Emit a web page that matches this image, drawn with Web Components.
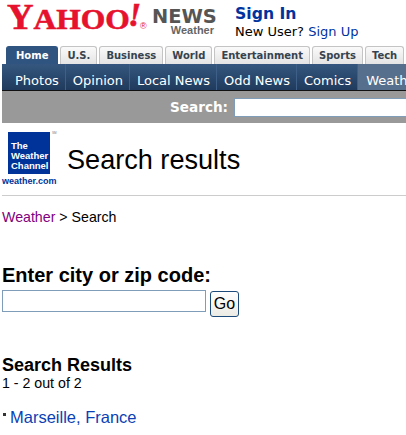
<!DOCTYPE html>
<html>
<head>
<meta charset="utf-8">
<style>
  html, body { margin: 0; padding: 0; background: #fff; overflow: hidden; }
  body { width: 406px; height: 435px; font-family: "Liberation Sans", Arial, sans-serif; color: #000; }
</style>
</head>
<body>
<site-header></site-header>
<tab-nav></tab-nav>
<sub-nav></sub-nav>
<search-strip></search-strip>
<page-title></page-title>
<bread-crumb></bread-crumb>
<city-form></city-form>
<search-results></search-results>

<script>
class SiteHeader extends HTMLElement {
  constructor() {
    super();
    this.attachShadow({ mode: "open" });
    this.shadowRoot.innerHTML = `
      <style>
        :host { display: flex; height: 44px; padding-left: 7px; }
        .logo { width: 145px; height: 44px; position: relative; flex: none; }
        .yahoo {
          display: inline-block;
          font: bold 35px/30px "Liberation Serif", serif;
          color: #e6112d;
          -webkit-text-stroke: .6px #e6112d;
          transform: scale(1.05, 1);
          transform-origin: 0 0;
          white-space: nowrap;
          margin-top: 3px;
        }
        .yahoo small { font-size: 30px; }
        .bang {
          position: absolute; left: 121px; top: 0;
          font: italic bold 34px/29px "Liberation Serif", serif;
          color: #e6112d;
          -webkit-text-stroke: .6px #e6112d;
        }
        .reg { position: absolute; left: 133px; top: 22px; font: 9px/9px "Liberation Sans", sans-serif; color: #e6112d; }
        .news { width: 83px; flex: none; margin-top: 8px; color: #555; }
        .news b { display: block; font: bold 19.4px/17px "DejaVu Sans", sans-serif; }
        .news span { display: block; font: bold 11px/11px "Liberation Sans", sans-serif; text-align: right; margin: 0 21px 0 0; color: #666; }
        .sign { padding-top: 4px; }
        .sign a { color: #0033a0; text-decoration: none; }
        .sign .in { display: block; font: bold 15.7px/20px "DejaVu Sans", sans-serif; }
        .sign .new { display: block; font: 13px/16px "DejaVu Sans", sans-serif; }
      </style>
      <div class="logo">
        <span class="yahoo">Y<small>AHOO</small></span><span class="bang">!</span><span class="reg">®</span>
      </div>
      <div class="news"><b>NEWS</b><span>Weather</span></div>
      <div class="sign">
        <a class="in" href="#">Sign In</a>
        <span class="new">New User? <a href="#">Sign Up</a></span>
      </div>`;
  }
}

class TabNav extends HTMLElement {
  constructor() {
    super();
    this.attachShadow({ mode: "open" });
    const tabs = ["Home", "U.S.", "Business", "World", "Entertainment", "Sports", "Tech"];
    this.shadowRoot.innerHTML = `
      <style>
        :host { display: flex; gap: 2px; height: 18px; margin-top: 2px; padding-left: 6px; overflow: hidden; }
        a {
          flex: none;
          font: bold 10px/18px "DejaVu Sans", sans-serif;
          color: #36434f;
          text-decoration: none;
          padding: 0 6px;
          border: 1px solid #c4c4c4;
          border-bottom: 0;
          border-radius: 3px 3px 0 0;
          background: linear-gradient(#fafafa, #e4e4e4);
        }
        a.on { background: #2f5480; color: #fff; border-color: #2f5480; padding: 0 9px; }
      </style>
      ${tabs.map((t, i) => `<a href="#" class="${i === 0 ? "on" : ""}">${t}</a>`).join("")}`;
  }
}

class SubNav extends HTMLElement {
  constructor() {
    super();
    this.attachShadow({ mode: "open" });
    const items = ["Photos", "Opinion", "Local News", "Odd News", "Comics", "Weather"];
    this.shadowRoot.innerHTML = `
      <style>
        :host {
          display: flex; height: 26px; margin-left: 2px; overflow: hidden;
          background: linear-gradient(#35577f, #1f3a5c);
          border-bottom: 1px solid #111;
        }
        a {
          flex: none;
          font: 13px/20px "DejaVu Sans", sans-serif;
          color: #fff;
          text-decoration: none;
          padding: 7px 6px 0 7px;
          border-right: 1px solid #3d5f88;
        }
        a:first-of-type { padding-left: 13px; }
        a.on { background: #566f8d; border: 0; padding-left: 8px; }
      </style>
      ${items.map((t, i) => `<a href="#" class="${i === 5 ? "on" : ""}">${t}</a>`).join("")}`;
  }
}

class SearchStrip extends HTMLElement {
  constructor() {
    super();
    this.attachShadow({ mode: "open" });
    this.shadowRoot.innerHTML = `
      <style>
        :host {
          display: flex; align-items: center; height: 32px; margin-left: 2px;
          padding-left: 168px; background: #999; overflow: hidden;
        }
        label { font: bold 13.6px/16px "DejaVu Sans", sans-serif; color: #fff; margin-right: 6px; flex: none; }
        input { flex: none; box-sizing: border-box; width: 200px; height: 19px; padding: 0; border: 1px solid #7f9db9; background: #fff; }
      </style>
      <label>Search:</label><input type="text">`;
  }
}

class PageTitle extends HTMLElement {
  constructor() {
    super();
    this.attachShadow({ mode: "open" });
    this.shadowRoot.innerHTML = `
      <style>
        :host {
          display: flex; align-items: flex-start; height: 72px; margin: 0 0 0 2px;
          border-bottom: 1px solid #ccc; position: relative;
        }
        .brand { width: 64px; flex: none; padding-top: 9px; }
        .box {
          width: 42px; height: 42px; margin-left: 6px; background: #003399; color: #fff;
          box-sizing: border-box; padding-top: 9px; padding-left: 3px; white-space: nowrap;
          font: bold 9.5px/10px "Liberation Sans", sans-serif;
        }
        .tm { position: absolute; left: 50px; top: 8px; font: 3px/4px "Liberation Sans", sans-serif; color: #777; }
        .dom { font: bold 9px/12px "Liberation Sans", sans-serif; color: #003399; white-space: nowrap; display: block; margin-top: 1px; }
        h1 { margin: 21px 0 0 1px; font: 27.1px/32px "Liberation Sans", sans-serif; }
      </style>
      <div class="brand">
        <div class="box">The<br>Weather<br>Channel</div>
        <span class="tm">SM</span>
        <span class="dom">weather.com</span>
      </div>
      <h1>Search results</h1>`;
  }
}

class BreadCrumb extends HTMLElement {
  constructor() {
    super();
    this.attachShadow({ mode: "open" });
    this.shadowRoot.innerHTML = `
      <style>
        :host { display: block; margin: 13px 0 0 2px; font: 14.2px/16px "Liberation Sans", sans-serif; }
        a { color: #800080; text-decoration: none; }
      </style>
      <a href="#">Weather</a> &gt; Search`;
  }
}

class CityForm extends HTMLElement {
  constructor() {
    super();
    this.attachShadow({ mode: "open" });
    this.shadowRoot.innerHTML = `
      <style>
        :host { display: block; margin: 38px 0 0 2px; }
        h2 { margin: 0; font: bold 20px/24px "Liberation Sans", sans-serif; }
        form { display: flex; align-items: flex-start; gap: 4px; margin: 3px 0 0; }
        input { box-sizing: border-box; width: 204px; height: 22px; padding: 0; border: 1px solid #7f9db9; background: #fff; }
        button {
          box-sizing: border-box; width: 29px; height: 26px; padding: 0; margin-top: 1px;
          font: 16px "Liberation Sans", sans-serif; color: #000;
          border: 1px solid #1c4a7a; border-radius: 3px;
          background: linear-gradient(#fff, #ecebe4);
        }
      </style>
      <h2>Enter city or zip code:</h2>
      <form onsubmit="return false"><input type="text"><button>Go</button></form>`;
  }
}

class SearchResults extends HTMLElement {
  constructor() {
    super();
    this.attachShadow({ mode: "open" });
    this.shadowRoot.innerHTML = `
      <style>
        :host { display: block; margin: 38px 0 0 2px; }
        h3 { margin: 0; font: bold 18px/20px "Liberation Sans", sans-serif; }
        p { margin: 0; font: 14.2px/16px "Liberation Sans", sans-serif; }
        .item { display: flex; align-items: flex-start; margin-top: 16px; font: 16.5px/20px "Liberation Sans", sans-serif; }
        .item i { width: 3px; height: 3px; background: #333; margin: 6px 4px 0 1px; flex: none; }
        a { color: #0b3fb5; text-decoration: none; }
      </style>
      <h3>Search Results</h3>
      <p>1 - 2 out of 2</p>
      <div class="item"><i></i><a href="#">Marseille, France</a></div>`;
  }
}

customElements.define("site-header", SiteHeader);
customElements.define("tab-nav", TabNav);
customElements.define("sub-nav", SubNav);
customElements.define("search-strip", SearchStrip);
customElements.define("page-title", PageTitle);
customElements.define("bread-crumb", BreadCrumb);
customElements.define("city-form", CityForm);
customElements.define("search-results", SearchResults);
</script>
</body>
</html>
